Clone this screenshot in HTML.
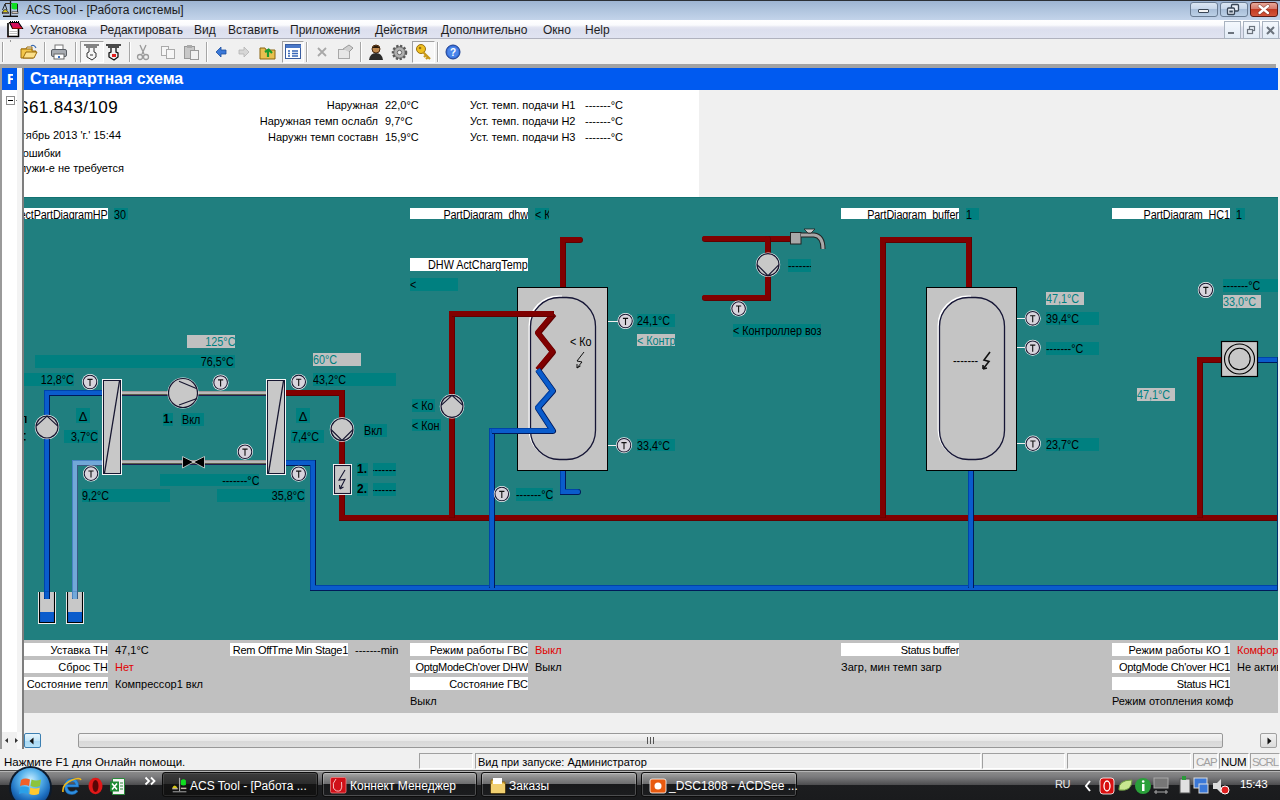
<!DOCTYPE html><html><head><meta charset="utf-8"><style>html,body{margin:0;padding:0;width:1280px;height:800px;overflow:hidden;background:#f0f0f0;font-family:"Liberation Sans",sans-serif;}div{box-sizing:border-box;}</style></head><body><div style="position:absolute;left:0;top:0;width:1280px;height:20px;background:linear-gradient(#9db4d3,#b3c7e0 55%,#c3d4ea);border-top:1px solid #2b2f36;"></div><svg style="position:absolute;left:0;top:0" width="22" height="20" viewBox="0 0 22 20"><path d="M10.5 1 V16" stroke="#111" stroke-width="1.3"/><path d="M3 16.3 H18" stroke="#111" stroke-width="1.4"/><path d="M5 3.5 H17" stroke="#3a2a1a" stroke-width="1"/><path d="M5 4 L2.5 10 M5 4 L7 10" stroke="#111" stroke-width="0.9"/><path d="M2.2 12.5 Q5 6.5 8.5 12.5 Z" fill="#d8c818" stroke="#222" stroke-width="0.8"/><rect x="2.5" y="12.3" width="6" height="1.4" fill="#e8d0c0" stroke="#222" stroke-width="0.6"/><path d="M11.5 3 H17.5 V9 Q14 10 11.5 8.5 Z" fill="#10e020"/><rect x="12" y="11.8" width="6" height="1.6" fill="#e8d8c8" stroke="#222" stroke-width="0.6"/><path d="M17.5 4 V12" stroke="#111" stroke-width="0.9"/></svg><div style="position:absolute;left:26px;top:3px;font-size:12px;color:#1b1b1b;white-space:nowrap;line-height:14px;">ACS Tool - [Работа системы]</div><div style="position:absolute;left:1190px;top:2px;width:28px;height:15px;background:linear-gradient(#dbe6f3,#c6d6ea 45%,#a9bfd9 50%,#bcd0e6);border:1px solid #6a7d94;border-radius:3px;"></div><div style="position:absolute;left:1220px;top:2px;width:28px;height:15px;background:linear-gradient(#dbe6f3,#c6d6ea 45%,#a9bfd9 50%,#bcd0e6);border:1px solid #6a7d94;border-radius:3px;"></div><div style="position:absolute;left:1250px;top:2px;width:28px;height:15px;background:linear-gradient(#e8a898,#d5786a 45%,#c43b22 50%,#d3563c);border:1px solid #5a1a14;border-radius:3px;"></div><div style="position:absolute;left:1198px;top:9px;width:11px;height:4px;background:#f4f4f4;border:1px solid #394656;border-radius:1px;"></div><svg style="position:absolute;left:1226px;top:3px" width="14" height="13"><rect x="5.5" y="1.5" width="7" height="6.5" rx="1" fill="#e8eef6" stroke="#394656" stroke-width="1.3"/><rect x="1.5" y="5" width="7" height="6.5" rx="1" fill="#e8eef6" stroke="#394656" stroke-width="1.3"/><rect x="3.3" y="7.5" width="3.5" height="2" fill="#394656"/></svg><svg style="position:absolute;left:1256px;top:3px" width="16" height="13"><path d="M3.5 3 L12 10 M12 3 L3.5 10" stroke="#5a2a20" stroke-width="3.6" stroke-linecap="round" opacity="0.5"/><path d="M3.5 3 L12 10 M12 3 L3.5 10" stroke="#ffffff" stroke-width="2.3" stroke-linecap="round"/></svg><div style="position:absolute;left:0;top:20px;width:1280px;height:19px;background:linear-gradient(#ffffff,#fafbfd 28%,#e4e6f1 40%,#dcdfee 55%,#e0e3f1);border-bottom:1px solid #b0b2be;"></div><svg style="position:absolute;left:4px;top:20px" width="20" height="20" viewBox="0 0 20 20"><rect x="4" y="3" width="11" height="13.5" fill="#fff"/><path d="M4 3 V16.5 H14.5 V9" fill="none" stroke="#000" stroke-width="1.6"/><path d="M3.5 16.8 H4.5" stroke="#600" stroke-width="1"/><path d="M5.5 2.5 H14.5 L18.5 8.5 H8.5 Z" fill="#d0105a" stroke="#000" stroke-width="1.1"/><path d="M8.5 8 H18" stroke="#ff1010" stroke-width="1"/><path d="M6 1.5 h1 M8 1.5 h1 M10 1.5 h1 M12 1.5 h1 M14 1.5 h1" stroke="#000" stroke-width="1.2"/><path d="M5.5 11.5 H13.5 M5.5 13.5 H13.5 M5.5 15.5 H13.5" stroke="#b0b0b0" stroke-width="0.8"/></svg><div style="position:absolute;left:30px;top:23px;font-size:12px;color:#1e1e1e;white-space:nowrap;line-height:14px;">Установка</div><div style="position:absolute;left:100px;top:23px;font-size:12px;color:#1e1e1e;white-space:nowrap;line-height:14px;">Редактировать</div><div style="position:absolute;left:194px;top:23px;font-size:12px;color:#1e1e1e;white-space:nowrap;line-height:14px;">Вид</div><div style="position:absolute;left:228px;top:23px;font-size:12px;color:#1e1e1e;white-space:nowrap;line-height:14px;">Вставить</div><div style="position:absolute;left:290px;top:23px;font-size:12px;color:#1e1e1e;white-space:nowrap;line-height:14px;">Приложения</div><div style="position:absolute;left:375px;top:23px;font-size:12px;color:#1e1e1e;white-space:nowrap;line-height:14px;">Действия</div><div style="position:absolute;left:441px;top:23px;font-size:12px;color:#1e1e1e;white-space:nowrap;line-height:14px;">Дополнительно</div><div style="position:absolute;left:543px;top:23px;font-size:12px;color:#1e1e1e;white-space:nowrap;line-height:14px;">Окно</div><div style="position:absolute;left:585px;top:23px;font-size:12px;color:#1e1e1e;white-space:nowrap;line-height:14px;">Help</div><div style="position:absolute;left:1224px;top:21px;width:17px;height:18px;background:linear-gradient(#f4f8fd,#e2ebf6);border:1px solid #a9b3c0;"></div><div style="position:absolute;left:1243px;top:21px;width:17px;height:18px;background:linear-gradient(#f4f8fd,#e2ebf6);border:1px solid #a9b3c0;"></div><div style="position:absolute;left:1262px;top:21px;width:17px;height:18px;background:linear-gradient(#f4f8fd,#e2ebf6);border:1px solid #a9b3c0;"></div><div style="position:absolute;left:1228px;top:32px;width:6px;height:2px;background:#6b737d"></div><svg style="position:absolute;left:1246px;top:25px" width="10" height="10"><rect x="3.5" y="1.5" width="5" height="4" fill="none" stroke="#6b737d" stroke-width="1.2"/><rect x="1.5" y="4.5" width="5" height="4" fill="#e8eef6" stroke="#6b737d" stroke-width="1.2"/></svg><svg style="position:absolute;left:1266px;top:26px" width="9" height="9"><path d="M1 1 L8 8 M8 1 L1 8" stroke="#6b737d" stroke-width="2"/></svg><div style="position:absolute;left:0px;top:39px;width:1280px;height:25px;background:#f0f0f0;"></div><div style="position:absolute;left:2px;top:42px;width:2px;height:20px;border-left:1px solid #a0a0a0;border-right:1px solid #fff;"></div><div style="position:absolute;left:10px;top:40px;width:1px;height:2px;background:#999;"></div><div style="position:absolute;left:44px;top:42px;width:2px;height:20px;border-left:1px solid #a6a6a6;border-right:1px solid #fff;"></div><div style="position:absolute;left:75px;top:42px;width:2px;height:20px;border-left:1px solid #a6a6a6;border-right:1px solid #fff;"></div><div style="position:absolute;left:129px;top:42px;width:2px;height:20px;border-left:1px solid #a6a6a6;border-right:1px solid #fff;"></div><div style="position:absolute;left:206px;top:42px;width:2px;height:20px;border-left:1px solid #a6a6a6;border-right:1px solid #fff;"></div><div style="position:absolute;left:306px;top:42px;width:2px;height:20px;border-left:1px solid #a6a6a6;border-right:1px solid #fff;"></div><div style="position:absolute;left:360px;top:42px;width:2px;height:20px;border-left:1px solid #a6a6a6;border-right:1px solid #fff;"></div><div style="position:absolute;left:437px;top:42px;width:2px;height:20px;border-left:1px solid #a6a6a6;border-right:1px solid #fff;"></div><div style="position:absolute;left:80px;top:41px;width:24px;height:22px;background:#f7f7f7;border:1px solid;border-color:#a0a0a0 #fff #fff #a0a0a0;"></div><div style="position:absolute;left:282px;top:41px;width:22px;height:22px;background:#f7f7f7;border:1px solid;border-color:#a0a0a0 #fff #fff #a0a0a0;"></div><div style="position:absolute;left:412px;top:41px;width:23px;height:22px;background:#f7f7f7;border:1px solid;border-color:#a0a0a0 #fff #fff #a0a0a0;"></div><svg style="position:absolute;left:20px;top:44px" width="18" height="16"><path d="M1 5 L6 5 L7 3 L12 3 L12 6" fill="none" stroke="#a0700a"/><path d="M1 14 L1 5 L12 5 L12 7 L16 7 L13 14 Z" fill="#f2c64a" stroke="#9a6a08"/><path d="M3 14 L6 8 L17 8 L14 14 Z" fill="#fbe08a" stroke="#9a6a08"/><path d="M11 2 Q14 0 16 4" fill="none" stroke="#3a6ab0" stroke-width="1.2"/></svg><svg style="position:absolute;left:50px;top:44px" width="18" height="16"><rect x="5" y="1" width="8" height="5" fill="#fff" stroke="#777"/><rect x="1.5" y="5.5" width="15" height="7" rx="1.5" fill="#a8acb2" stroke="#5a5e64"/><rect x="4" y="10" width="10" height="5" fill="#fff" stroke="#666"/><rect x="8" y="12" width="2" height="2" fill="#3a70c0"/></svg><svg style="position:absolute;left:83px;top:44px" width="18" height="17"><path d="M1 1 H16 M3 3 H14" stroke="#111" stroke-width="1.2"/><path d="M6 4 L6 8 L4 9 L4 13 L9 16 L13 13 L13 9 L11 8 L11 4" fill="none" stroke="#333"/><path d="M7 11 L10 11" stroke="#333"/></svg><svg style="position:absolute;left:105px;top:44px" width="18" height="17"><path d="M1 1 H16 M3 3 H14" stroke="#111" stroke-width="1.4"/><path d="M6 4 L6 8 L4 9 L4 13 L9 16 L13 13 L13 9 L11 8 L11 4" fill="none" stroke="#111" stroke-width="1.3"/><rect x="7" y="10" width="4" height="3" fill="#e02020"/></svg><svg style="position:absolute;left:136px;top:44px" width="14" height="17"><path d="M4 1 L8 10 M10 1 L6 10" stroke="#9a9a9a" stroke-width="1.3"/><circle cx="4" cy="13" r="2.5" fill="none" stroke="#9a9a9a" stroke-width="1.3"/><circle cx="10" cy="13" r="2.5" fill="none" stroke="#9a9a9a" stroke-width="1.3"/></svg><svg style="position:absolute;left:160px;top:45px" width="16" height="15"><rect x="1.5" y="1.5" width="7" height="9" fill="#f6f6f6" stroke="#aaa"/><rect x="6.5" y="4.5" width="8" height="9" fill="#f6f6f6" stroke="#aaa"/></svg><svg style="position:absolute;left:183px;top:44px" width="17" height="16"><rect x="1.5" y="2.5" width="10" height="12" fill="#c8c8c8" stroke="#999"/><rect x="4" y="1" width="5" height="3" fill="#aaa"/><rect x="7.5" y="6.5" width="8" height="9" fill="#f0f0f0" stroke="#999"/></svg><svg style="position:absolute;left:215px;top:46px" width="12" height="12"><path d="M1 6 L6 1 L6 4 L11 4 L11 8 L6 8 L6 11 Z" fill="#3a78d8" stroke="#1d4e9e" stroke-width="0.8"/></svg><svg style="position:absolute;left:238px;top:46px" width="12" height="12"><path d="M11 6 L6 1 L6 4 L1 4 L1 8 L6 8 L6 11 Z" fill="#d6d6d6" stroke="#b4b4b4" stroke-width="0.8"/></svg><svg style="position:absolute;left:259px;top:44px" width="18" height="16"><path d="M1 15 L1 4 L6 4 L7 6 L16 6 L16 15 Z" fill="#e8c050" stroke="#8a6410"/><path d="M9 13 L9 6 L6 8 M9 5 L13 9" fill="none" stroke="#1a9a30" stroke-width="2.2"/></svg><svg style="position:absolute;left:285px;top:44px" width="17" height="16"><rect x="0.5" y="0.5" width="15" height="14" fill="#fff" stroke="#3a5da0"/><rect x="1" y="1" width="15" height="3" fill="#4a78c8"/><path d="M3 7 H5 M7 7 H13 M3 9.5 H5 M7 9.5 H13 M3 12 H5 M7 12 H13" stroke="#3a68b8" stroke-width="1.3"/></svg><svg style="position:absolute;left:316px;top:46px" width="12" height="12"><path d="M2 2 L10 10 M10 2 L2 10" stroke="#a8a8a8" stroke-width="1.8"/></svg><svg style="position:absolute;left:337px;top:44px" width="17" height="16"><rect x="1.5" y="5.5" width="11" height="9" fill="#e6e6e6" stroke="#a8a8a8"/><path d="M6 5 L12 1 L16 4 L12 8" fill="#cfcfcf" stroke="#9a9a9a"/></svg><svg style="position:absolute;left:368px;top:43px" width="16" height="18"><circle cx="8" cy="6" r="4" fill="#c08a50" stroke="#4a2a10"/><path d="M4 5 Q8 0 12 5" fill="#2a1a0a"/><path d="M1 17 Q2 10 8 10 Q14 10 15 17 Z" fill="#2a2a2a"/></svg><svg style="position:absolute;left:391px;top:44px" width="17" height="17"><circle cx="8.5" cy="8.5" r="6.5" fill="#8a8a8a" stroke="#5a5a5a" stroke-width="2.5" stroke-dasharray="2.2 1.6"/><circle cx="8.5" cy="8.5" r="5" fill="#b0b0b0"/><circle cx="8.5" cy="8.5" r="2.2" fill="#f0f0f0" stroke="#666"/></svg><svg style="position:absolute;left:415px;top:43px" width="17" height="18"><circle cx="6" cy="6" r="4.5" fill="#f0c020" stroke="#9a7010"/><circle cx="5" cy="5" r="1.3" fill="#9a7010"/><path d="M8 9 L15 16 M11 12 L9 14 M13 14 L11 16" stroke="#c89818" stroke-width="2.2"/></svg><svg style="position:absolute;left:445px;top:44px" width="16" height="16"><circle cx="8" cy="8" r="7" fill="#3a6ed8" stroke="#1a3e90"/><circle cx="8" cy="8" r="5.5" fill="#4a86ea"/><text x="8" y="12" font-size="10" font-weight="bold" fill="#fff" text-anchor="middle" font-family="Liberation Sans">?</text></svg><div style="position:absolute;left:0px;top:64px;width:1280px;height:4px;background:#a3a3a3;"></div><div style="position:absolute;left:1276px;top:64px;width:4px;height:4px;background:#f0f0f0;"></div><div style="position:absolute;left:0px;top:68px;width:23px;height:664px;background:#ffffff;"></div><div style="position:absolute;left:0px;top:68px;width:2px;height:664px;background:#9a9a9a;"></div><div style="position:absolute;left:2px;top:68px;width:15px;height:22px;background:#005af0;"></div><div style="position:absolute;left:2px;top:68px;width:11px;height:22px;overflow:hidden;"><div style="position:absolute;left:5px;top:2px;font-size:15px;line-height:18px;color:#fff;font-weight:bold;">F</div></div><div style="position:absolute;left:17px;top:68px;width:5px;height:664px;background:#f3f3f3;"></div><div style="position:absolute;left:22px;top:68px;width:2px;height:664px;background:#7d7d7d;"></div><div style="position:absolute;left:6px;top:96px;width:9px;height:9px;border:1px solid #8d8d8d;background:#fff;"></div><div style="position:absolute;left:8px;top:100px;width:5px;height:1px;background:#000;"></div><div style="position:absolute;left:16px;top:100px;width:1px;height:1px;background:#888;"></div><div style="position:absolute;left:24px;top:68px;width:1254px;height:22px;background:#005af0;"></div><div style="position:absolute;left:1278px;top:64px;width:2px;height:668px;background:#f0f0f0;"></div><div style="position:absolute;left:30px;top:70px;font-size:16px;color:#fff;white-space:nowrap;font-weight:bold;line-height:18px;">Стандартная схема</div><div style="position:absolute;left:24px;top:90px;width:675px;height:107px;background:#ffffff;"></div><div style="position:absolute;left:699px;top:90px;width:579px;height:107px;background:#f0f0f0;"></div><div style="position:absolute;left:24px;top:90px;width:200px;height:107px;overflow:hidden;"><div style="position:absolute;left:-206px;top:8px;width:300px;text-align:right;font-size:17px;line-height:19px;white-space:nowrap;color:#000;letter-spacing:0.4px;">S61.843/109</div><div style="position:absolute;left:-203px;top:39px;width:300px;text-align:right;font-size:11px;line-height:13px;white-space:nowrap;color:#000;letter-spacing:0px;">Октябрь 2013 'г.' 15:44</div><div style="position:absolute;left:-263px;top:57px;width:300px;text-align:right;font-size:11px;line-height:13px;white-space:nowrap;color:#000;letter-spacing:0px;">Нет ошибки</div><div style="position:absolute;left:-200px;top:72px;width:300px;text-align:right;font-size:11px;line-height:13px;white-space:nowrap;color:#000;letter-spacing:0px;">Обслужи-е не требуется</div></div><div style="position:absolute;left:238px;top:99px;font-size:11px;color:#000;white-space:nowrap;width:140px;overflow:hidden;text-align:right;line-height:13px;">Наружная</div><div style="position:absolute;left:385px;top:99px;font-size:11px;color:#000;white-space:nowrap;line-height:13px;">22,0°C</div><div style="position:absolute;left:238px;top:115px;font-size:11px;color:#000;white-space:nowrap;width:140px;overflow:hidden;text-align:right;line-height:13px;">Наружная темп ослабл</div><div style="position:absolute;left:385px;top:115px;font-size:11px;color:#000;white-space:nowrap;line-height:13px;">9,7°C</div><div style="position:absolute;left:238px;top:131px;font-size:11px;color:#000;white-space:nowrap;width:140px;overflow:hidden;text-align:right;line-height:13px;">Наружн темп составн</div><div style="position:absolute;left:385px;top:131px;font-size:11px;color:#000;white-space:nowrap;line-height:13px;">15,9°C</div><div style="position:absolute;left:470px;top:99px;font-size:11px;color:#000;white-space:nowrap;line-height:13px;">Уст. темп. подачи Н1</div><div style="position:absolute;left:585px;top:99px;font-size:11px;color:#000;white-space:nowrap;line-height:13px;">-------°C</div><div style="position:absolute;left:470px;top:115px;font-size:11px;color:#000;white-space:nowrap;line-height:13px;">Уст. темп. подачи Н2</div><div style="position:absolute;left:585px;top:115px;font-size:11px;color:#000;white-space:nowrap;line-height:13px;">-------°C</div><div style="position:absolute;left:470px;top:131px;font-size:11px;color:#000;white-space:nowrap;line-height:13px;">Уст. темп. подачи Н3</div><div style="position:absolute;left:585px;top:131px;font-size:11px;color:#000;white-space:nowrap;line-height:13px;">-------°C</div><div style="position:absolute;left:24px;top:197px;width:1254px;height:443px;background:#207f7f;"></div><div style="position:absolute;left:24px;top:197px;width:1254px;height:1px;background:#127272;"></div><svg style="position:absolute;left:0;top:0" width="1280" height="800" viewBox="0 0 1280 800"><path d="M103 393 H47 V599" fill="none" stroke="#001a5a" stroke-width="6" stroke-linejoin="miter" stroke-linecap="butt"/><path d="M103 393 H47 V599" fill="none" stroke="#0044aa" stroke-width="5" stroke-linejoin="miter" stroke-linecap="butt" transform="translate(-0.5,-0.5)"/><path d="M103 393 H47 V599" fill="none" stroke="#0a5ccc" stroke-width="4" stroke-linejoin="miter" stroke-linecap="butt"/><path d="M103 463 H75 V599" fill="none" stroke="#3a5a82" stroke-width="6" stroke-linejoin="miter" stroke-linecap="butt"/><path d="M103 463 H75 V599" fill="none" stroke="#4a84c4" stroke-width="5" stroke-linejoin="miter" stroke-linecap="butt" transform="translate(-0.5,-0.5)"/><path d="M103 463 H75 V599" fill="none" stroke="#72a8d8" stroke-width="4" stroke-linejoin="miter" stroke-linecap="butt"/><path d="M121 393.5 H267" fill="none" stroke="#1e1e50" stroke-width="5" stroke-linejoin="miter" stroke-linecap="butt"/><path d="M121 393.5 H267" fill="none" stroke="#5a5a46" stroke-width="4" stroke-linejoin="miter" stroke-linecap="butt" transform="translate(-0.5,-0.5)"/><path d="M121 393.5 H267" fill="none" stroke="#a09a9a" stroke-width="3" stroke-linejoin="miter" stroke-linecap="butt" transform="translate(-1,-1)"/><path d="M121 393.5 H267" fill="none" stroke="#b8b8b8" stroke-width="2" stroke-linejoin="miter" stroke-linecap="butt" transform="translate(-0.5,-0.5)"/><path d="M121 462.5 H267" fill="none" stroke="#1e1e50" stroke-width="5" stroke-linejoin="miter" stroke-linecap="butt"/><path d="M121 462.5 H267" fill="none" stroke="#5a5a46" stroke-width="4" stroke-linejoin="miter" stroke-linecap="butt" transform="translate(-0.5,-0.5)"/><path d="M121 462.5 H267" fill="none" stroke="#a09a9a" stroke-width="3" stroke-linejoin="miter" stroke-linecap="butt" transform="translate(-1,-1)"/><path d="M121 462.5 H267" fill="none" stroke="#b8b8b8" stroke-width="2" stroke-linejoin="miter" stroke-linecap="butt" transform="translate(-0.5,-0.5)"/><path d="M286 393 H342 V518 H1278" fill="none" stroke="#600000" stroke-width="6" stroke-linejoin="miter" stroke-linecap="butt"/><path d="M286 393 H342 V518 H1278" fill="none" stroke="#800000" stroke-width="5" stroke-linejoin="miter" stroke-linecap="butt" transform="translate(-0.5,-0.5)"/><path d="M286 463 H313 V588 H1278" fill="none" stroke="#001a5a" stroke-width="6" stroke-linejoin="miter" stroke-linecap="butt"/><path d="M286 463 H313 V588 H1278" fill="none" stroke="#0044aa" stroke-width="5" stroke-linejoin="miter" stroke-linecap="butt" transform="translate(-0.5,-0.5)"/><path d="M286 463 H313 V588 H1278" fill="none" stroke="#0a5ccc" stroke-width="4" stroke-linejoin="miter" stroke-linecap="butt"/><path d="M452 518 V314 H556" fill="none" stroke="#600000" stroke-width="6" stroke-linejoin="miter" stroke-linecap="butt"/><path d="M452 518 V314 H556" fill="none" stroke="#800000" stroke-width="5" stroke-linejoin="miter" stroke-linecap="butt" transform="translate(-0.5,-0.5)"/><path d="M556 431 H492 V588" fill="none" stroke="#001a5a" stroke-width="6" stroke-linejoin="miter" stroke-linecap="butt"/><path d="M556 431 H492 V588" fill="none" stroke="#0044aa" stroke-width="5" stroke-linejoin="miter" stroke-linecap="butt" transform="translate(-0.5,-0.5)"/><path d="M556 431 H492 V588" fill="none" stroke="#0a5ccc" stroke-width="4" stroke-linejoin="miter" stroke-linecap="butt"/><path d="M563 288 V240 H580" fill="none" stroke="#600000" stroke-width="6" stroke-linejoin="miter" stroke-linecap="round"/><path d="M563 288 V240 H580" fill="none" stroke="#800000" stroke-width="5" stroke-linejoin="miter" stroke-linecap="round" transform="translate(-0.5,-0.5)"/><path d="M563 470 V492 H578" fill="none" stroke="#001a5a" stroke-width="6" stroke-linejoin="miter" stroke-linecap="round"/><path d="M563 470 V492 H578" fill="none" stroke="#0044aa" stroke-width="5" stroke-linejoin="miter" stroke-linecap="round" transform="translate(-0.5,-0.5)"/><path d="M563 470 V492 H578" fill="none" stroke="#0a5ccc" stroke-width="4" stroke-linejoin="miter" stroke-linecap="round"/><path d="M705 239 H791" fill="none" stroke="#600000" stroke-width="6" stroke-linejoin="miter" stroke-linecap="round"/><path d="M705 239 H791" fill="none" stroke="#800000" stroke-width="5" stroke-linejoin="miter" stroke-linecap="round" transform="translate(-0.5,-0.5)"/><path d="M768 239 V298 H705" fill="none" stroke="#600000" stroke-width="6" stroke-linejoin="miter" stroke-linecap="round"/><path d="M768 239 V298 H705" fill="none" stroke="#800000" stroke-width="5" stroke-linejoin="miter" stroke-linecap="round" transform="translate(-0.5,-0.5)"/><path d="M883 518 V240 H969 V288" fill="none" stroke="#600000" stroke-width="6" stroke-linejoin="miter" stroke-linecap="butt"/><path d="M883 518 V240 H969 V288" fill="none" stroke="#800000" stroke-width="5" stroke-linejoin="miter" stroke-linecap="butt" transform="translate(-0.5,-0.5)"/><path d="M971 470 V588" fill="none" stroke="#001a5a" stroke-width="6" stroke-linejoin="miter" stroke-linecap="butt"/><path d="M971 470 V588" fill="none" stroke="#0044aa" stroke-width="5" stroke-linejoin="miter" stroke-linecap="butt" transform="translate(-0.5,-0.5)"/><path d="M971 470 V588" fill="none" stroke="#0a5ccc" stroke-width="4" stroke-linejoin="miter" stroke-linecap="butt"/><path d="M1200 518 V360 H1222" fill="none" stroke="#600000" stroke-width="6" stroke-linejoin="miter" stroke-linecap="butt"/><path d="M1200 518 V360 H1222" fill="none" stroke="#800000" stroke-width="5" stroke-linejoin="miter" stroke-linecap="butt" transform="translate(-0.5,-0.5)"/><path d="M1258 360 H1278" fill="none" stroke="#001a5a" stroke-width="6" stroke-linejoin="miter" stroke-linecap="butt"/><path d="M1258 360 H1278" fill="none" stroke="#0044aa" stroke-width="5" stroke-linejoin="miter" stroke-linecap="butt" transform="translate(-0.5,-0.5)"/><path d="M1258 360 H1278" fill="none" stroke="#0a5ccc" stroke-width="4" stroke-linejoin="miter" stroke-linecap="butt"/><rect x="1277" y="357" width="1" height="234" fill="#003070"/><rect x="102" y="379" width="20" height="96" fill="#f6f6f6"/><rect x="103.5" y="380.5" width="17" height="93" fill="#c8c8c8" stroke="#161630" stroke-width="1"/><path d="M104.5 473 L119.5 381" stroke="#161630" stroke-width="1.3"/><rect x="266" y="379" width="20" height="96" fill="#f6f6f6"/><rect x="267.5" y="380.5" width="17" height="93" fill="#c8c8c8" stroke="#161630" stroke-width="1"/><path d="M268.5 473 L283.5 381" stroke="#161630" stroke-width="1.3"/><circle cx="90" cy="382" r="8" fill="#f6f6f6"/><circle cx="90" cy="382" r="6.8" fill="#d8d4dc" stroke="#161630" stroke-width="1.05"/><path d="M87.4 379.4 H92.6 M90 379.4 V386" stroke="#111" stroke-width="1.1"/><circle cx="91" cy="473.6" r="8" fill="#f6f6f6"/><circle cx="91" cy="473.6" r="6.8" fill="#d8d4dc" stroke="#161630" stroke-width="1.05"/><path d="M88.4 471.0 H93.6 M91 471.0 V477.6" stroke="#111" stroke-width="1.1"/><circle cx="220.6" cy="382.5" r="8" fill="#f6f6f6"/><circle cx="220.6" cy="382.5" r="6.8" fill="#d8d4dc" stroke="#161630" stroke-width="1.05"/><path d="M218.0 379.9 H223.2 M220.6 379.9 V386.5" stroke="#111" stroke-width="1.1"/><circle cx="245" cy="451.7" r="8" fill="#f6f6f6"/><circle cx="245" cy="451.7" r="6.8" fill="#d8d4dc" stroke="#161630" stroke-width="1.05"/><path d="M242.4 449.09999999999997 H247.6 M245 449.09999999999997 V455.7" stroke="#111" stroke-width="1.1"/><circle cx="298.7" cy="381.9" r="8" fill="#f6f6f6"/><circle cx="298.7" cy="381.9" r="6.8" fill="#d8d4dc" stroke="#161630" stroke-width="1.05"/><path d="M296.09999999999997 379.29999999999995 H301.3 M298.7 379.29999999999995 V385.9" stroke="#111" stroke-width="1.1"/><circle cx="298.7" cy="473.7" r="8" fill="#f6f6f6"/><circle cx="298.7" cy="473.7" r="6.8" fill="#d8d4dc" stroke="#161630" stroke-width="1.05"/><path d="M296.09999999999997 471.09999999999997 H301.3 M298.7 471.09999999999997 V477.7" stroke="#111" stroke-width="1.1"/><circle cx="47" cy="427" r="12.2" fill="#f6f6f6"/><circle cx="47" cy="427" r="11" fill="#c8c8c8" stroke="#161630" stroke-width="1.2"/><path d="M36.44 425.9 L47 416 L57.56 425.9" fill="none" stroke="#161630" stroke-width="1.1"/><circle cx="342" cy="429.5" r="12.2" fill="#f6f6f6"/><circle cx="342" cy="429.5" r="11" fill="#c8c8c8" stroke="#161630" stroke-width="1.2"/><path d="M331 429.5 L342 440.5 L353 429.5" fill="none" stroke="#161630" stroke-width="1.1"/><circle cx="183" cy="393" r="15.5" fill="#f6f6f6"/><circle cx="183" cy="393" r="14.5" fill="#c8c8c8" stroke="#161630" stroke-width="1.2"/><path d="M179 381.2 L197 388.8 M179 405 L197 398.5" stroke="#161630" stroke-width="1.2"/><path d="M182.5 456.5 L193.5 462 L204.5 456.5 L204.5 468 L193.5 462 L182.5 468 Z" fill="#000" stroke="#d8d8d8" stroke-width="0.8"/><rect x="333" y="464" width="19" height="31" fill="#f6f6f6"/><rect x="334.5" y="465.5" width="16" height="28" fill="#c8c8c8" stroke="#161630" stroke-width="1.1"/><path d="M345 470 L339 480 L345 479.5 L340 489 M340 489 L339.5 485 M340 489 L343.5 487" fill="none" stroke="#161630" stroke-width="1.1"/><rect x="38" y="592" width="18" height="32" fill="#f0f0f0"/><rect x="39" y="592" width="16" height="31" fill="#c8c8c8"/><rect x="40" y="612" width="14" height="10" fill="#0a5ccc"/><path d="M39.5 592 V622.5 H54.5 V592" fill="none" stroke="#000" stroke-width="1.1"/><rect x="66" y="592" width="18" height="32" fill="#f0f0f0"/><rect x="67" y="592" width="16" height="31" fill="#c8c8c8"/><rect x="68" y="612" width="14" height="10" fill="#0a5ccc"/><path d="M67.5 592 V622.5 H82.5 V592" fill="none" stroke="#000" stroke-width="1.1"/><path d="M47 592 V599" fill="none" stroke="#001a5a" stroke-width="6" stroke-linejoin="miter" stroke-linecap="butt"/><path d="M47 592 V599" fill="none" stroke="#0044aa" stroke-width="5" stroke-linejoin="miter" stroke-linecap="butt" transform="translate(-0.5,-0.5)"/><path d="M47 592 V599" fill="none" stroke="#0a5ccc" stroke-width="4" stroke-linejoin="miter" stroke-linecap="butt"/><path d="M75 592 V599" fill="none" stroke="#3a5a82" stroke-width="6" stroke-linejoin="miter" stroke-linecap="butt"/><path d="M75 592 V599" fill="none" stroke="#4a84c4" stroke-width="5" stroke-linejoin="miter" stroke-linecap="butt" transform="translate(-0.5,-0.5)"/><path d="M75 592 V599" fill="none" stroke="#72a8d8" stroke-width="4" stroke-linejoin="miter" stroke-linecap="butt"/><rect x="517.5" y="287.5" width="90" height="183" fill="#c4c4c4" stroke="#000" stroke-width="1"/><clipPath id="cl517"><rect x="517" y="287" width="46.0" height="183"/></clipPath><path d="M530.5 326.5 A29 29 0 0 1 559.5 297.5 H566.5 A29 29 0 0 1 595.5 326.5 V430.5 A29 29 0 0 1 566.5 459.5 H559.5 A29 29 0 0 1 530.5 430.5 Z" fill="none" stroke="#ffffff" stroke-width="2" transform="translate(-1,-1)" clip-path="url(#cl517)"/><path d="M530.5 326.5 A29 29 0 0 1 559.5 297.5 H566.5 A29 29 0 0 1 595.5 326.5 V430.5 A29 29 0 0 1 566.5 459.5 H559.5 A29 29 0 0 1 530.5 430.5 Z" fill="#c4c4c4" stroke="#161636" stroke-width="1.3"/><rect x="926.5" y="287.5" width="90" height="183" fill="#c4c4c4" stroke="#000" stroke-width="1"/><clipPath id="cl926"><rect x="926" y="287" width="46.0" height="183"/></clipPath><path d="M939.5 326.5 A29 29 0 0 1 968.5 297.5 H975.5 A29 29 0 0 1 1004.5 326.5 V430.5 A29 29 0 0 1 975.5 459.5 H968.5 A29 29 0 0 1 939.5 430.5 Z" fill="none" stroke="#ffffff" stroke-width="2" transform="translate(-1,-1)" clip-path="url(#cl926)"/><path d="M939.5 326.5 A29 29 0 0 1 968.5 297.5 H975.5 A29 29 0 0 1 1004.5 326.5 V430.5 A29 29 0 0 1 975.5 459.5 H968.5 A29 29 0 0 1 939.5 430.5 Z" fill="#c4c4c4" stroke="#161636" stroke-width="1.3"/><path d="M554 314 L538 333 L553 352 L538 370" fill="none" stroke="#600000" stroke-width="6" stroke-linejoin="round" stroke-linecap="butt"/><path d="M554 314 L538 333 L553 352 L538 370" fill="none" stroke="#800000" stroke-width="5" stroke-linejoin="round" stroke-linecap="butt" transform="translate(-0.5,-0.5)"/><path d="M538 370 L553 391 L538 408 L553 431 H492" fill="none" stroke="#001a5a" stroke-width="6" stroke-linejoin="round" stroke-linecap="butt"/><path d="M538 370 L553 391 L538 408 L553 431 H492" fill="none" stroke="#0044aa" stroke-width="5" stroke-linejoin="round" stroke-linecap="butt" transform="translate(-0.5,-0.5)"/><path d="M538 370 L553 391 L538 408 L553 431 H492" fill="none" stroke="#0a5ccc" stroke-width="4" stroke-linejoin="round" stroke-linecap="butt"/><path d="M452 314 H554" fill="none" stroke="#600000" stroke-width="6" stroke-linejoin="miter" stroke-linecap="butt"/><path d="M452 314 H554" fill="none" stroke="#800000" stroke-width="5" stroke-linejoin="miter" stroke-linecap="butt" transform="translate(-0.5,-0.5)"/><path d="M608 321.5 H618 M608 445.5 H617 M1017 318.5 H1025 M1017 347.5 H1025 M1017 443.5 H1025" stroke="#f0f0f0" stroke-width="1.2"/><circle cx="625.5" cy="321" r="8" fill="#f6f6f6"/><circle cx="625.5" cy="321" r="6.8" fill="#d8d4dc" stroke="#161630" stroke-width="1.05"/><path d="M622.9 318.4 H628.1 M625.5 318.4 V325" stroke="#111" stroke-width="1.1"/><circle cx="624" cy="445.2" r="8" fill="#f6f6f6"/><circle cx="624" cy="445.2" r="6.8" fill="#d8d4dc" stroke="#161630" stroke-width="1.05"/><path d="M621.4 442.59999999999997 H626.6 M624 442.59999999999997 V449.2" stroke="#111" stroke-width="1.1"/><circle cx="501.8" cy="494" r="8" fill="#f6f6f6"/><circle cx="501.8" cy="494" r="6.8" fill="#d8d4dc" stroke="#161630" stroke-width="1.05"/><path d="M499.2 491.4 H504.40000000000003 M501.8 491.4 V498" stroke="#111" stroke-width="1.1"/><circle cx="738.6" cy="308.6" r="8" fill="#f6f6f6"/><circle cx="738.6" cy="308.6" r="6.8" fill="#d8d4dc" stroke="#161630" stroke-width="1.05"/><path d="M736.0 306.0 H741.2 M738.6 306.0 V312.6" stroke="#111" stroke-width="1.1"/><circle cx="1032.7" cy="318.3" r="8" fill="#f6f6f6"/><circle cx="1032.7" cy="318.3" r="6.8" fill="#d8d4dc" stroke="#161630" stroke-width="1.05"/><path d="M1030.1000000000001 315.7 H1035.3 M1032.7 315.7 V322.3" stroke="#111" stroke-width="1.1"/><circle cx="1032.7" cy="347.7" r="8" fill="#f6f6f6"/><circle cx="1032.7" cy="347.7" r="6.8" fill="#d8d4dc" stroke="#161630" stroke-width="1.05"/><path d="M1030.1000000000001 345.09999999999997 H1035.3 M1032.7 345.09999999999997 V351.7" stroke="#111" stroke-width="1.1"/><circle cx="1032.9" cy="443.6" r="8" fill="#f6f6f6"/><circle cx="1032.9" cy="443.6" r="6.8" fill="#d8d4dc" stroke="#161630" stroke-width="1.05"/><path d="M1030.3000000000002 441.0 H1035.5 M1032.9 441.0 V447.6" stroke="#111" stroke-width="1.1"/><circle cx="1205.8" cy="290" r="8" fill="#f6f6f6"/><circle cx="1205.8" cy="290" r="6.8" fill="#d8d4dc" stroke="#161630" stroke-width="1.05"/><path d="M1203.2 287.4 H1208.3999999999999 M1205.8 287.4 V294" stroke="#111" stroke-width="1.1"/><circle cx="452" cy="406.3" r="12.2" fill="#f6f6f6"/><circle cx="452" cy="406.3" r="11" fill="#c8c8c8" stroke="#161630" stroke-width="1.2"/><path d="M441.44 405.2 L452 395.3 L462.56 405.2" fill="none" stroke="#161630" stroke-width="1.1"/><circle cx="768" cy="264.6" r="12.2" fill="#f6f6f6"/><circle cx="768" cy="264.6" r="11" fill="#c8c8c8" stroke="#161630" stroke-width="1.2"/><path d="M757 264.6 L768 275.6 L779 264.6" fill="none" stroke="#161630" stroke-width="1.1"/><path d="M584 352 L577 361 L582 362 L577 368 M577 368 L577 364 M577 368 L580.5 366" fill="none" stroke="#111" stroke-width="1"/><path d="M990 352 L984 360 L989 361.5 L983 369 M983 369 L983 365 M983 369 L987 368" fill="none" stroke="#111" stroke-width="1.6"/><rect x="790.5" y="232.5" width="10.5" height="11.5" fill="#a8a8a8" stroke="#222" stroke-width="1"/><path d="M801 235 H814 Q823 236 823 249" fill="none" stroke="#222" stroke-width="5"/><path d="M801 235 H814 Q823 236 823 249" fill="none" stroke="#a8a8a8" stroke-width="3"/><path d="M804 229 H815 L811 233 H808 Z" fill="#c8c8c8" stroke="#222" stroke-width="0.8"/><rect x="1221.5" y="341.5" width="36" height="35" fill="#c8c8c8" stroke="#000" stroke-width="1.2"/><circle cx="1239.5" cy="359" r="15" fill="none" stroke="#000" stroke-width="1.1"/><circle cx="1239.5" cy="359" r="10.7" fill="none" stroke="#000" stroke-width="1.1"/></svg><div style="position:absolute;left:24px;top:208px;width:84px;height:11px;background:#ffffff;color:#000;line-height:13px;white-space:nowrap;overflow:hidden;letter-spacing:-0.15px;display:flex;justify-content:flex-end;"><span style="font-size:12px;transform:scaleX(0.9);transform-origin:right center;display:inline-block;position:relative;top:1px;margin-left:-20px;">SelectPartDiagramHP</span></div><div style="position:absolute;left:114px;top:208px;width:14px;height:12px;background:#008080;color:#000;line-height:13px;white-space:nowrap;overflow:hidden;letter-spacing:0px;display:flex;"><span style="font-size:12px;transform:scaleX(0.9);transform-origin:left center;display:inline-block;position:relative;top:1px;margin-right:-20px;">30</span></div><div style="position:absolute;left:410px;top:208px;width:118px;height:11px;background:#ffffff;color:#000;line-height:13px;white-space:nowrap;overflow:hidden;letter-spacing:-0.15px;display:flex;justify-content:flex-end;"><span style="font-size:12px;transform:scaleX(0.9);transform-origin:right center;display:inline-block;position:relative;top:1px;margin-left:-20px;">PartDiagram_dhw</span></div><div style="position:absolute;left:535px;top:208px;width:14px;height:12px;background:#008080;color:#000;line-height:13px;white-space:nowrap;overflow:hidden;letter-spacing:0px;display:flex;"><span style="font-size:12px;transform:scaleX(0.9);transform-origin:left center;display:inline-block;position:relative;top:1px;margin-right:-20px;">&lt; К</span></div><div style="position:absolute;left:410px;top:258px;width:118px;height:13px;background:#ffffff;color:#000;line-height:13px;white-space:nowrap;overflow:hidden;letter-spacing:0px;display:flex;justify-content:flex-end;"><span style="font-size:12px;transform:scaleX(0.9);transform-origin:right center;display:inline-block;position:relative;top:1px;margin-left:-20px;">DHW ActChargTemp</span></div><div style="position:absolute;left:410px;top:278px;width:48px;height:13px;background:#008080;color:#000;line-height:13px;white-space:nowrap;overflow:hidden;letter-spacing:0px;display:flex;"><span style="font-size:12px;transform:scaleX(0.9);transform-origin:left center;display:inline-block;position:relative;top:1px;margin-right:-20px;">&lt;</span></div><div style="position:absolute;left:841px;top:208px;width:118px;height:11px;background:#ffffff;color:#000;line-height:13px;white-space:nowrap;overflow:hidden;letter-spacing:-0.15px;display:flex;justify-content:flex-end;"><span style="font-size:12px;transform:scaleX(0.9);transform-origin:right center;display:inline-block;position:relative;top:1px;margin-left:-20px;">PartDiagram_buffer</span></div><div style="position:absolute;left:966px;top:208px;width:13px;height:12px;background:#008080;color:#000;line-height:13px;white-space:nowrap;overflow:hidden;letter-spacing:0px;display:flex;"><span style="font-size:12px;transform:scaleX(0.9);transform-origin:left center;display:inline-block;position:relative;top:1px;margin-right:-20px;">1</span></div><div style="position:absolute;left:1112px;top:208px;width:118px;height:11px;background:#ffffff;color:#000;line-height:13px;white-space:nowrap;overflow:hidden;letter-spacing:-0.15px;display:flex;justify-content:flex-end;"><span style="font-size:12px;transform:scaleX(0.9);transform-origin:right center;display:inline-block;position:relative;top:1px;margin-left:-20px;">PartDiagram_HC1</span></div><div style="position:absolute;left:1236px;top:208px;width:9px;height:12px;background:#008080;color:#000;line-height:13px;white-space:nowrap;overflow:hidden;letter-spacing:0px;display:flex;"><span style="font-size:12px;transform:scaleX(0.9);transform-origin:left center;display:inline-block;position:relative;top:1px;margin-right:-20px;">1</span></div><div style="position:absolute;left:187px;top:335px;width:48px;height:13px;background:#c0c0c0;color:#008080;line-height:13px;white-space:nowrap;overflow:hidden;letter-spacing:0px;display:flex;justify-content:flex-end;"><span style="font-size:12px;transform:scaleX(0.9);transform-origin:right center;display:inline-block;position:relative;top:1px;margin-left:-20px;">125°C</span></div><div style="position:absolute;left:35px;top:355px;width:200px;height:13px;background:#008080;color:#000;line-height:13px;white-space:nowrap;overflow:hidden;letter-spacing:0px;display:flex;padding-right:1px;justify-content:flex-end;"><span style="font-size:12px;transform:scaleX(0.9);transform-origin:right center;display:inline-block;position:relative;top:1px;margin-left:-20px;">76,5°C</span></div><div style="position:absolute;left:24px;top:373px;width:50px;height:13px;background:#008080;color:#000;line-height:13px;white-space:nowrap;overflow:hidden;letter-spacing:0px;display:flex;justify-content:flex-end;"><span style="font-size:12px;transform:scaleX(0.9);transform-origin:right center;display:inline-block;position:relative;top:1px;margin-left:-20px;">12,8°C</span></div><div style="position:absolute;left:313px;top:353px;width:48px;height:13px;background:#c0c0c0;color:#008080;line-height:13px;white-space:nowrap;overflow:hidden;letter-spacing:0px;display:flex;"><span style="font-size:12px;transform:scaleX(0.9);transform-origin:left center;display:inline-block;position:relative;top:1px;margin-right:-20px;">60°C</span></div><div style="position:absolute;left:313px;top:373px;width:83px;height:13px;background:#008080;color:#000;line-height:13px;white-space:nowrap;overflow:hidden;letter-spacing:0px;display:flex;"><span style="font-size:12px;transform:scaleX(0.9);transform-origin:left center;display:inline-block;position:relative;top:1px;margin-right:-20px;">43,2°C</span></div><div style="position:absolute;left:76px;top:408px;width:14px;height:15px;background:#008080;color:#000;line-height:17px;white-space:nowrap;overflow:hidden;letter-spacing:0px;display:flex;justify-content:center;"><span style="font-size:13px;">Δ</span></div><div style="position:absolute;left:64px;top:430px;width:34px;height:13px;background:#008080;color:#000;line-height:13px;white-space:nowrap;overflow:hidden;letter-spacing:0px;display:flex;justify-content:flex-end;"><span style="font-size:12px;transform:scaleX(0.9);transform-origin:right center;display:inline-block;position:relative;top:1px;margin-left:-20px;">3,7°C</span></div><div style="position:absolute;left:296px;top:408px;width:14px;height:15px;background:#008080;color:#000;line-height:17px;white-space:nowrap;overflow:hidden;letter-spacing:0px;display:flex;justify-content:center;"><span style="font-size:13px;">Δ</span></div><div style="position:absolute;left:291px;top:430px;width:33px;height:13px;background:#008080;color:#000;line-height:13px;white-space:nowrap;overflow:hidden;letter-spacing:0px;display:flex;padding-left:1px;"><span style="font-size:12px;transform:scaleX(0.9);transform-origin:left center;display:inline-block;position:relative;top:1px;margin-right:-20px;">7,4°C</span></div><div style="position:absolute;left:163px;top:413px;width:10px;height:13px;background:#008080;color:#000;line-height:13px;white-space:nowrap;overflow:hidden;letter-spacing:0px;display:flex;font-weight:bold;"><span style="font-size:12px;">1.</span></div><div style="position:absolute;left:181px;top:413px;width:23px;height:13px;background:#008080;color:#000;line-height:13px;white-space:nowrap;overflow:hidden;letter-spacing:0px;display:flex;padding-left:1px;"><span style="font-size:12px;transform:scaleX(0.9);transform-origin:left center;display:inline-block;position:relative;top:1px;margin-right:-20px;">Вкл</span></div><div style="position:absolute;left:364px;top:424px;width:23px;height:13px;background:#008080;color:#000;line-height:13px;white-space:nowrap;overflow:hidden;letter-spacing:0px;display:flex;"><span style="font-size:12px;transform:scaleX(0.9);transform-origin:left center;display:inline-block;position:relative;top:1px;margin-right:-20px;">Вкл</span></div><div style="position:absolute;left:160px;top:474px;width:99px;height:12px;background:#008080;color:#000;line-height:12px;white-space:nowrap;overflow:hidden;letter-spacing:0px;display:flex;justify-content:flex-end;"><span style="font-size:12px;transform:scaleX(0.9);transform-origin:right center;display:inline-block;position:relative;top:1px;margin-left:-20px;">-------°C</span></div><div style="position:absolute;left:82px;top:489px;width:88px;height:13px;background:#008080;color:#000;line-height:13px;white-space:nowrap;overflow:hidden;letter-spacing:0px;display:flex;"><span style="font-size:12px;transform:scaleX(0.9);transform-origin:left center;display:inline-block;position:relative;top:1px;margin-right:-20px;">9,2°C</span></div><div style="position:absolute;left:217px;top:489px;width:88px;height:13px;background:#008080;color:#000;line-height:13px;white-space:nowrap;overflow:hidden;letter-spacing:0px;display:flex;justify-content:flex-end;"><span style="font-size:12px;transform:scaleX(0.9);transform-origin:right center;display:inline-block;position:relative;top:1px;margin-left:-20px;">35,8°C</span></div><div style="position:absolute;left:357px;top:463px;width:11px;height:13px;background:#008080;color:#000;line-height:13px;white-space:nowrap;overflow:hidden;letter-spacing:0px;display:flex;font-weight:bold;"><span style="font-size:12px;">1.</span></div><div style="position:absolute;left:373px;top:463px;width:23px;height:13px;background:#008080;color:#000;line-height:13px;white-space:nowrap;overflow:hidden;letter-spacing:0px;display:flex;justify-content:flex-end;"><span style="font-size:12px;transform:scaleX(0.9);transform-origin:right center;display:inline-block;position:relative;top:1px;margin-left:-20px;">-------</span></div><div style="position:absolute;left:357px;top:483px;width:11px;height:13px;background:#008080;color:#000;line-height:13px;white-space:nowrap;overflow:hidden;letter-spacing:0px;display:flex;font-weight:bold;"><span style="font-size:12px;">2.</span></div><div style="position:absolute;left:373px;top:483px;width:23px;height:13px;background:#008080;color:#000;line-height:13px;white-space:nowrap;overflow:hidden;letter-spacing:0px;display:flex;justify-content:flex-end;"><span style="font-size:12px;transform:scaleX(0.9);transform-origin:right center;display:inline-block;position:relative;top:1px;margin-left:-20px;">-------</span></div><svg style="position:absolute;left:22px;top:410px" width="8" height="34"><rect x="3" y="6" width="1.5" height="7" fill="#000"/><rect x="2" y="6" width="1.5" height="1" fill="#000"/><rect x="2" y="23" width="1.5" height="1.5" fill="#000"/><rect x="2" y="29" width="1.5" height="1.5" fill="#000"/></svg><div style="position:absolute;left:412px;top:399px;width:23px;height:13px;background:#008080;color:#000;line-height:13px;white-space:nowrap;overflow:hidden;letter-spacing:0px;display:flex;"><span style="font-size:12px;transform:scaleX(0.9);transform-origin:left center;display:inline-block;position:relative;top:1px;margin-right:-20px;">&lt; Ко</span></div><div style="position:absolute;left:412px;top:419px;width:29px;height:12px;background:#008080;color:#000;line-height:12px;white-space:nowrap;overflow:hidden;letter-spacing:0px;display:flex;"><span style="font-size:12px;transform:scaleX(0.9);transform-origin:left center;display:inline-block;position:relative;top:1px;margin-right:-20px;">&lt; Кон</span></div><div style="position:absolute;left:637px;top:314px;width:38px;height:13px;background:#008080;color:#000;line-height:13px;white-space:nowrap;overflow:hidden;letter-spacing:0px;display:flex;"><span style="font-size:12px;transform:scaleX(0.9);transform-origin:left center;display:inline-block;position:relative;top:1px;margin-right:-20px;">24,1°C</span></div><div style="position:absolute;left:637px;top:334px;width:38px;height:12px;background:#c0c0c0;color:#008080;line-height:12px;white-space:nowrap;overflow:hidden;letter-spacing:0px;display:flex;"><span style="font-size:12px;transform:scaleX(0.9);transform-origin:left center;display:inline-block;position:relative;top:1px;margin-right:-20px;">&lt; Контр</span></div><div style="position:absolute;left:637px;top:439px;width:38px;height:12px;background:#008080;color:#000;line-height:12px;white-space:nowrap;overflow:hidden;letter-spacing:0px;display:flex;"><span style="font-size:12px;transform:scaleX(0.9);transform-origin:left center;display:inline-block;position:relative;top:1px;margin-right:-20px;">33,4°C</span></div><div style="position:absolute;left:516px;top:488px;width:37px;height:13px;background:#008080;color:#000;line-height:13px;white-space:nowrap;overflow:hidden;letter-spacing:0px;display:flex;"><span style="font-size:12px;transform:scaleX(0.9);transform-origin:left center;display:inline-block;position:relative;top:1px;margin-right:-20px;">-------°C</span></div><div style="position:absolute;left:570px;top:335px;width:30px;height:13px;background:transparent;color:#000;line-height:13px;white-space:nowrap;overflow:hidden;letter-spacing:0px;display:flex;"><span style="font-size:12px;transform:scaleX(0.9);transform-origin:left center;display:inline-block;position:relative;top:1px;margin-right:-20px;">&lt; Ко</span></div><div style="position:absolute;left:788px;top:259px;width:23px;height:13px;background:#008080;color:#000;line-height:13px;white-space:nowrap;overflow:hidden;letter-spacing:0px;display:flex;"><span style="font-size:12px;transform:scaleX(0.9);transform-origin:left center;display:inline-block;position:relative;top:1px;margin-right:-20px;">-------</span></div><div style="position:absolute;left:733px;top:324px;width:88px;height:13px;background:#008080;color:#000;line-height:13px;white-space:nowrap;overflow:hidden;letter-spacing:0px;display:flex;"><span style="font-size:12px;transform:scaleX(0.9);transform-origin:left center;display:inline-block;position:relative;top:1px;margin-right:-20px;">&lt; Контроллер воз</span></div><div style="position:absolute;left:1046px;top:292px;width:38px;height:13px;background:#c0c0c0;color:#008080;line-height:13px;white-space:nowrap;overflow:hidden;letter-spacing:0px;display:flex;"><span style="font-size:12px;transform:scaleX(0.9);transform-origin:left center;display:inline-block;position:relative;top:1px;margin-right:-20px;">47,1°C</span></div><div style="position:absolute;left:1046px;top:312px;width:53px;height:13px;background:#008080;color:#000;line-height:13px;white-space:nowrap;overflow:hidden;letter-spacing:0px;display:flex;"><span style="font-size:12px;transform:scaleX(0.9);transform-origin:left center;display:inline-block;position:relative;top:1px;margin-right:-20px;">39,4°C</span></div><div style="position:absolute;left:1046px;top:342px;width:53px;height:13px;background:#008080;color:#000;line-height:13px;white-space:nowrap;overflow:hidden;letter-spacing:0px;display:flex;"><span style="font-size:12px;transform:scaleX(0.9);transform-origin:left center;display:inline-block;position:relative;top:1px;margin-right:-20px;">-------°C</span></div><div style="position:absolute;left:1046px;top:438px;width:53px;height:13px;background:#008080;color:#000;line-height:13px;white-space:nowrap;overflow:hidden;letter-spacing:0px;display:flex;"><span style="font-size:12px;transform:scaleX(0.9);transform-origin:left center;display:inline-block;position:relative;top:1px;margin-right:-20px;">23,7°C</span></div><div style="position:absolute;left:953px;top:354px;width:30px;height:13px;background:transparent;color:#000;line-height:13px;white-space:nowrap;overflow:hidden;letter-spacing:0px;display:flex;"><span style="font-size:12px;transform:scaleX(0.9);transform-origin:left center;display:inline-block;position:relative;top:1px;margin-right:-20px;">-------</span></div><div style="position:absolute;left:1223px;top:279px;width:55px;height:13px;background:#008080;color:#000;line-height:13px;white-space:nowrap;overflow:hidden;letter-spacing:0px;display:flex;"><span style="font-size:12px;transform:scaleX(0.9);transform-origin:left center;display:inline-block;position:relative;top:1px;margin-right:-20px;">-------°C</span></div><div style="position:absolute;left:1223px;top:295px;width:38px;height:13px;background:#c0c0c0;color:#008080;line-height:13px;white-space:nowrap;overflow:hidden;letter-spacing:0px;display:flex;"><span style="font-size:12px;transform:scaleX(0.9);transform-origin:left center;display:inline-block;position:relative;top:1px;margin-right:-20px;">33,0°C</span></div><div style="position:absolute;left:1137px;top:388px;width:38px;height:13px;background:#c0c0c0;color:#008080;line-height:13px;white-space:nowrap;overflow:hidden;letter-spacing:0px;display:flex;"><span style="font-size:12px;transform:scaleX(0.9);transform-origin:left center;display:inline-block;position:relative;top:1px;margin-right:-20px;">47,1°C</span></div><div style="position:absolute;left:24px;top:640px;width:1254px;height:73px;background:#c0c0c0;"></div><div style="position:absolute;left:24px;top:643px;width:84px;height:13px;background:#fff;font-size:11px;line-height:15px;white-space:nowrap;overflow:hidden;display:flex;justify-content:flex-end;letter-spacing:0px;"><span>Уставка ТН</span></div><div style="position:absolute;left:115px;top:644px;font-size:11px;line-height:13px;color:#000;white-space:nowrap;">47,1°C</div><div style="position:absolute;left:24px;top:660px;width:84px;height:13px;background:#fff;font-size:11px;line-height:15px;white-space:nowrap;overflow:hidden;display:flex;justify-content:flex-end;letter-spacing:0px;"><span>Сброс ТН</span></div><div style="position:absolute;left:115px;top:661px;font-size:11px;line-height:13px;color:#e00000;white-space:nowrap;">Нет</div><div style="position:absolute;left:24px;top:677px;width:84px;height:13px;background:#fff;font-size:11px;line-height:15px;white-space:nowrap;overflow:hidden;display:flex;justify-content:flex-end;letter-spacing:0px;"><span>Состояние тепл</span></div><div style="position:absolute;left:115px;top:678px;font-size:11px;line-height:13px;color:#000;white-space:nowrap;">Компрессор1 вкл</div><div style="position:absolute;left:230px;top:643px;width:118px;height:13px;background:#fff;font-size:11px;line-height:15px;white-space:nowrap;overflow:hidden;display:flex;justify-content:flex-end;letter-spacing:-0.3px;"><span>Rem OffTme Min Stage1</span></div><div style="position:absolute;left:355px;top:644px;font-size:11px;line-height:13px;color:#000;white-space:nowrap;">-------min</div><div style="position:absolute;left:410px;top:643px;width:118px;height:13px;background:#fff;font-size:11px;line-height:15px;white-space:nowrap;overflow:hidden;display:flex;justify-content:flex-end;letter-spacing:0px;"><span>Режим работы ГВС</span></div><div style="position:absolute;left:535px;top:644px;font-size:11px;line-height:13px;color:#e00000;white-space:nowrap;">Выкл</div><div style="position:absolute;left:410px;top:660px;width:118px;height:13px;background:#fff;font-size:11px;line-height:15px;white-space:nowrap;overflow:hidden;display:flex;justify-content:flex-end;letter-spacing:-0.3px;"><span>OptgModeCh'over DHW</span></div><div style="position:absolute;left:535px;top:661px;font-size:11px;line-height:13px;color:#000;white-space:nowrap;">Выкл</div><div style="position:absolute;left:410px;top:677px;width:118px;height:13px;background:#fff;font-size:11px;line-height:15px;white-space:nowrap;overflow:hidden;display:flex;justify-content:flex-end;letter-spacing:0px;"><span>Состояние ГВС</span></div><div style="position:absolute;left:410px;top:695px;font-size:11px;line-height:13px;color:#000;white-space:nowrap;">Выкл</div><div style="position:absolute;left:841px;top:643px;width:118px;height:13px;background:#fff;font-size:11px;line-height:15px;white-space:nowrap;overflow:hidden;display:flex;justify-content:flex-end;letter-spacing:-0.3px;"><span>Status buffer</span></div><div style="position:absolute;left:841px;top:661px;font-size:11px;line-height:13px;color:#000;white-space:nowrap;">Загр, мин темп загр</div><div style="position:absolute;left:1112px;top:643px;width:118px;height:13px;background:#fff;font-size:11px;line-height:15px;white-space:nowrap;overflow:hidden;display:flex;justify-content:flex-end;letter-spacing:0px;"><span>Режим работы КО 1</span></div><div style="position:absolute;left:1237px;top:643px;width:41px;height:13px;overflow:hidden;font-size:11px;line-height:15px;color:#e00000;white-space:nowrap;">Комфорт</div><div style="position:absolute;left:1112px;top:660px;width:118px;height:13px;background:#fff;font-size:11px;line-height:15px;white-space:nowrap;overflow:hidden;display:flex;justify-content:flex-end;letter-spacing:-0.3px;"><span>OptgMode Ch'over HC1</span></div><div style="position:absolute;left:1237px;top:660px;width:41px;height:13px;overflow:hidden;font-size:11px;line-height:15px;white-space:nowrap;">Не активно</div><div style="position:absolute;left:1112px;top:677px;width:118px;height:13px;background:#fff;font-size:11px;line-height:15px;white-space:nowrap;overflow:hidden;display:flex;justify-content:flex-end;letter-spacing:-0.3px;"><span>Status HC1</span></div><div style="position:absolute;left:1112px;top:695px;font-size:11px;line-height:13px;color:#000;white-space:nowrap;">Режим отопления комф</div><div style="position:absolute;left:24px;top:713px;width:1254px;height:19px;background:#f0f0f0;"></div><div style="position:absolute;left:0px;top:732px;width:1280px;height:17px;background:#f0f0f0;"></div><div style="position:absolute;left:0px;top:732px;width:2px;height:17px;background:#9a9a9a;"></div><div style="position:absolute;left:22px;top:732px;width:2px;height:17px;background:#7d7d7d;"></div><div style="position:absolute;left:17px;top:732px;width:5px;height:17px;background:#f8f8f8;"></div><svg style="position:absolute;left:0;top:732px" width="24" height="17"><path d="M8 6 L5 8.5 L8 11 Z" fill="#333"/><path d="M15 6 L18 8.5 L15 11 Z" fill="#333"/></svg><div style="position:absolute;left:24px;top:733px;width:17px;height:15px;background:linear-gradient(#e6f5fd,#c4e6f8 50%,#a8d8f4 51%,#b8e2f8);border:1px solid #3c7fb1;border-radius:2px;"></div><svg style="position:absolute;left:27px;top:736px" width="10" height="10"><path d="M6.5 1.5 L2.5 5 L6.5 8.5 Z" fill="#111"/></svg><div style="position:absolute;left:78px;top:733px;width:1145px;height:15px;background:linear-gradient(#f4f4f4,#e8e8e8 50%,#d8d8d8 51%,#dedede);border:1px solid #989898;border-radius:2px;"></div><svg style="position:absolute;left:646px;top:736px" width="9" height="9"><path d="M1.5 1 V8 M4.5 1 V8 M7.5 1 V8" stroke="#555"/></svg><div style="position:absolute;left:1260px;top:733px;width:17px;height:15px;background:linear-gradient(#f2f2f2,#dcdcdc);border:1px solid #a0a0a0;border-radius:2px;"></div><svg style="position:absolute;left:1264px;top:736px" width="10" height="10"><path d="M3.5 1.5 L7.5 5 L3.5 8.5 Z" fill="#111"/></svg><div style="position:absolute;left:0px;top:749px;width:1280px;height:21px;background:#f0f0f0;"></div><div style="position:absolute;left:4px;top:756px;font-size:11.5px;line-height:13px;color:#000;white-space:nowrap;">Нажмите F1 для Онлайн помощи.</div><div style="position:absolute;left:419px;top:753px;width:54px;height:16px;border:1px solid;border-color:#a0a0a0 #fff #fff #a0a0a0;"></div><div style="position:absolute;left:475px;top:753px;width:506px;height:16px;border:1px solid;border-color:#a0a0a0 #fff #fff #a0a0a0;"></div><div style="position:absolute;left:982px;top:753px;width:83px;height:16px;border:1px solid;border-color:#a0a0a0 #fff #fff #a0a0a0;"></div><div style="position:absolute;left:1067px;top:753px;width:124px;height:16px;border:1px solid;border-color:#a0a0a0 #fff #fff #a0a0a0;"></div><div style="position:absolute;left:1193px;top:753px;width:25px;height:16px;border:1px solid;border-color:#a0a0a0 #fff #fff #a0a0a0;"></div><div style="position:absolute;left:1219px;top:753px;width:30px;height:16px;border:1px solid;border-color:#a0a0a0 #fff #fff #a0a0a0;"></div><div style="position:absolute;left:1250px;top:753px;width:30px;height:16px;border:1px solid;border-color:#a0a0a0 #fff #fff #a0a0a0;"></div><div style="position:absolute;left:478px;top:756px;font-size:11px;line-height:13px;color:#000;white-space:nowrap;">Вид при запуске: Администратор</div><div style="position:absolute;left:1196px;top:756px;font-size:11.5px;letter-spacing:-1px;line-height:13px;color:#a0a0a0;">CAP</div><div style="position:absolute;left:1221px;top:756px;font-size:11.5px;letter-spacing:-0.3px;line-height:13px;color:#000;">NUM</div><div style="position:absolute;left:1252px;top:756px;font-size:11.5px;letter-spacing:-1.2px;line-height:13px;color:#a0a0a0;">SCRL</div><div style="position:absolute;left:0;top:770px;width:1280px;height:30px;background:linear-gradient(#4a4a4a 0px,#4a4a4a 1px,#b4b4b4 1px,#b4b4b4 2px,#8a8a8a 2px,#7a7a7c 7px,#4c4c4e 15px,#1c1d1f 15px,#1a1b1d 30px);"></div><div style="position:absolute;left:9px;top:766px;width:43px;height:43px;border-radius:50%;background:#0c1a2c;"></div><div style="position:absolute;left:11px;top:768px;width:39px;height:39px;border-radius:50%;background:radial-gradient(circle at 50% 30%,#c8ecff 0%,#5ab4ec 30%,#1d6fc0 60%,#0b3a78 85%,#082850 100%);"></div><svg style="position:absolute;left:19px;top:776px" width="24" height="22" viewBox="0 0 24 22"><path d="M2 4 Q6 1.5 11 3.5 L10 10 Q6 8 1 10 Z" fill="#f0602a"/><path d="M12.5 3.5 Q17 5.5 22 3.5 L21 10 Q16 12 11.5 10 Z" fill="#8cc43c"/><path d="M1 11.5 Q5.5 9.5 10 11.5 L9 18 Q5 16 0 18 Z" fill="#2aa0e8"/><path d="M11.3 11.5 Q16 13.5 20.8 11.5 L19.8 18 Q15 20 10.3 18 Z" fill="#ffc830"/></svg><svg style="position:absolute;left:62px;top:775px" width="72" height="22" viewBox="0 0 72 22"><path d="M12.5 12 H5.5 Q6 16.5 10 16.5 Q12.5 16.5 14 14.8 L16 16.5 Q13.5 19.5 10 19.5 Q2.5 19.5 2.5 11.5 Q2.5 3.5 10 3.5 Q17 3.5 16.8 12 Z M5.6 9.5 H13.5 Q13 6.5 10 6.5 Q6.5 6.5 5.6 9.5 Z" fill="#2e8fe0" stroke="#1a5fa8" stroke-width="0.6"/><path d="M1 17 Q0 9 10 5 Q18 2 19 5" fill="none" stroke="#f0b818" stroke-width="1.6"/><ellipse cx="33.5" cy="11" rx="7" ry="8.2" fill="#e01818"/><ellipse cx="33.5" cy="11" rx="3" ry="6" fill="#5a0606"/><path d="M50.5 3.5 H62.5 V19.5 H50.5 Z" fill="#f4f4f4" stroke="#2a8a3a" stroke-width="1"/><path d="M48 6.5 H57 V16.5 H48 Z" fill="#1e8a34"/><path d="M50 8.5 L55 14.5 M55 8.5 L50 14.5" stroke="#fff" stroke-width="1.6"/><path d="M58 8 H61 M58 11 H61 M58 14 H61" stroke="#2a8a3a" stroke-width="1"/></svg><svg style="position:absolute;left:144px;top:776px" width="14" height="10"><path d="M1.5 1.5 L5 5 L1.5 8.5 M7 1.5 L10.5 5 L7 8.5" fill="none" stroke="#fff" stroke-width="1.8"/></svg><div style="position:absolute;left:162px;top:772px;width:156px;height:25px;background:linear-gradient(#3c3c3c,#2a2a2a 50%,#141414 50%,#111);border:1px solid #0c0c0c;border-radius:3px;box-shadow:inset 0 0 0 1px rgba(255,255,255,0.10);"></div><div style="position:absolute;left:190px;top:779px;font-size:12px;line-height:15px;color:#fff;white-space:nowrap;">ACS Tool - [Работа ...</div><div style="position:absolute;left:322px;top:772px;width:155px;height:25px;background:linear-gradient(#a8a8a8,#8a8a8a 20%,#6a6a6c 50%,#18191b 50%,#1c1d1f);border:1px solid #0c0c0c;border-radius:3px;box-shadow:inset 0 0 0 1px rgba(255,255,255,0.22);"></div><div style="position:absolute;left:350px;top:779px;font-size:12px;line-height:15px;color:#fff;white-space:nowrap;">Коннект Менеджер</div><div style="position:absolute;left:481px;top:772px;width:156px;height:25px;background:linear-gradient(#a8a8a8,#8a8a8a 20%,#6a6a6c 50%,#18191b 50%,#1c1d1f);border:1px solid #0c0c0c;border-radius:3px;box-shadow:inset 0 0 0 1px rgba(255,255,255,0.22);"></div><div style="position:absolute;left:509px;top:779px;font-size:12px;line-height:15px;color:#fff;white-space:nowrap;">Заказы</div><div style="position:absolute;left:641px;top:772px;width:156px;height:25px;background:linear-gradient(#a8a8a8,#8a8a8a 20%,#6a6a6c 50%,#18191b 50%,#1c1d1f);border:1px solid #0c0c0c;border-radius:3px;box-shadow:inset 0 0 0 1px rgba(255,255,255,0.22);"></div><div style="position:absolute;left:669px;top:779px;font-size:12px;line-height:15px;color:#fff;white-space:nowrap;">_DSC1808 - ACDSee ...</div><svg style="position:absolute;left:170px;top:776px" width="20" height="20" viewBox="0 0 22 20"><path d="M10.5 1 V16" stroke="#aaa" stroke-width="1.3"/><path d="M3 16.3 H18" stroke="#888" stroke-width="1.4"/><path d="M2.2 12.5 Q5 6.5 8.5 12.5 Z" fill="#d8c818"/><rect x="2.5" y="12.3" width="6" height="1.4" fill="#c8b8a8"/><path d="M12 4 Q15 1 17.5 4 V9 Q14 10 12 8.5 Z" fill="#10e020"/><rect x="12" y="11.8" width="6" height="1.6" fill="#c8b8a8"/></svg><svg style="position:absolute;left:330px;top:777px" width="17" height="17"><rect x="0.5" y="0.5" width="15.5" height="15.5" rx="1.5" fill="#d01018" stroke="#f08080" stroke-width="0.8"/><path d="M6 2 Q2 6 3.5 11 Q6 15.5 10.5 13.5 Q12.5 11 11.5 5" fill="none" stroke="#f6c0c0" stroke-width="1"/></svg><svg style="position:absolute;left:489px;top:777px" width="18" height="18"><path d="M2 3 H8 L10 5 H16 V16 H2 Z" fill="#e8c050" stroke="#8a6410"/><rect x="4" y="1" width="9" height="13" fill="#fff"/><path d="M2 7 H16 V16 H2 Z" fill="#f2d070"/></svg><svg style="position:absolute;left:649px;top:777px" width="18" height="18"><rect x="1" y="2" width="16" height="14" rx="2" fill="#e85a10" stroke="#fff" stroke-width="0.8"/><circle cx="9" cy="9" r="3.5" fill="#fff"/></svg><div style="position:absolute;left:1055px;top:777px;font-size:11px;line-height:14px;color:#e8e8e8;letter-spacing:-0.5px;">RU</div><svg style="position:absolute;left:1082px;top:775px" width="150" height="22"><path d="M8 6 L4 11 L8 16" fill="none" stroke="#fff" stroke-width="2"/><rect x="18" y="3" width="14" height="16" rx="3" fill="#d81010" stroke="#fff" stroke-width="0.8"/><ellipse cx="25" cy="11" rx="3" ry="5" fill="none" stroke="#fff" stroke-width="1.3"/><path d="M37 15 Q36 5 50 5 Q50 17 37 15 Z" fill="#c8e890" stroke="#6a9a40"/><circle cx="61" cy="11" r="8" fill="#2aa03a"/><rect x="60" y="9" width="2.5" height="7" fill="#fff"/><circle cx="61.2" cy="6.5" r="1.3" fill="#fff"/><rect x="72" y="3" width="14" height="10" fill="#777" stroke="#aaa"/><path d="M72 17 H86 M74 15 V19 M84 15 V19" stroke="#aaa"/><rect x="98" y="4" width="10" height="14" fill="#e0e0e0" stroke="#555"/><rect x="100" y="1" width="4" height="4" fill="#2a9a3a"/><rect x="112" y="3" width="13" height="10" fill="#3a78d8" stroke="#ddd"/><rect x="117" y="9" width="9" height="9" fill="#3a78d8" stroke="#ddd"/><path d="M131 8 H135 L139 4 V18 L135 14 H131 Z" fill="#ddd"/><circle cx="143" cy="15" r="4" fill="#e02020" stroke="#fff"/></svg><div style="position:absolute;left:1240px;top:777px;font-size:11.5px;line-height:14px;color:#fff;letter-spacing:-0.3px;">15:43</div></body></html>
